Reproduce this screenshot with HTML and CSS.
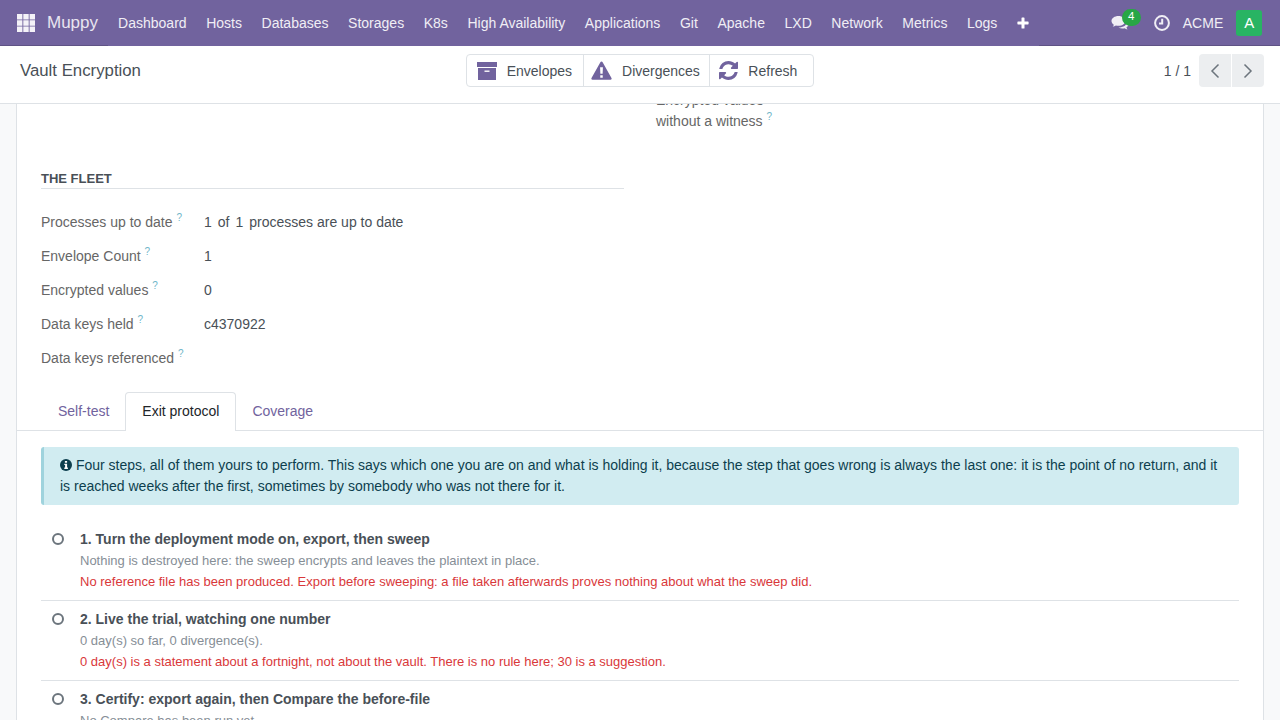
FILE: index.html
```html
<!DOCTYPE html>
<html lang="en">
  <head>
    <meta charset="UTF-8" />
    <title>Vault Encryption - Muppy</title>
    <link rel="stylesheet" href="styles.css">
  </head>
  <body>
    <header class="navbar">
      <div class="brand">
        <svg class="apps-icon" viewBox="0 0 18 18" width="18" height="18">
          <path d="M0 0h5.400v5.400H0zM6.300 0h5.400v5.400H6.300zM12.600 0H18v5.400h-5.400zM0 6.300h5.400v5.400H0zM6.300 6.300h5.400v5.400H6.300zM12.600 6.300H18v5.400h-5.400zM0 12.600h5.400V18H0zM6.300 12.600h5.400V18H6.300zM12.600 12.600H18V18h-5.400z"/>
        </svg>
        <span class="brand-name">Muppy</span>
      </div>
      <nav class="menu">
        <a href="#">Dashboard</a>
        <a href="#">Hosts</a>
        <a href="#">Databases</a>
        <a href="#">Storages</a>
        <a href="#">K8s</a>
        <a href="#">High Availability</a>
        <a href="#">Applications</a>
        <a href="#">Git</a>
        <a href="#">Apache</a>
        <a href="#">LXD</a>
        <a href="#">Network</a>
        <a href="#">Metrics</a>
        <a href="#">Logs</a>
        <a href="#" class="menu-plus">
          <svg viewBox="0 0 12 12" width="12" height="12"><path d="M4.500 1a.6.6 0 0 1 .6-.6h1.800a.6.6 0 0 1 .6.600v3.400H11a.6.6 0 0 1 .6.600v1.800a.6.6 0 0 1-.6.600H7.500V11a.6.6 0 0 1-.6.6H5.100a.6.6 0 0 1-.6-.6V7.400H1a.6.6 0 0 1-.6-.6V5a.6.6 0 0 1 .6-.6h3.500z"/></svg>
        </a>
      </nav>
      <div class="systray">
        <div class="chat">
          <svg viewBox="0 0 18 16" width="18" height="16">
            <path d="M7.500 1C3.600 1 .5 3.200.5 6c0 1.500.9 2.800 2.300 3.700-.2.800-.6 1.500-1.200 2.100 1.200-.1 2.400-.6 3.300-1.300.8.200 1.600.300 2.600.300 3.900 0 7-2.200 7-4.800S11.400 1 7.500 1z"/>
            <path d="M16 6.500c.9.800 1.500 1.700 1.500 2.800 0 1.300-.8 2.400-2.100 3.200.2.700.6 1.300 1.100 1.900-1.100-.1-2.100-.5-2.900-1.200-.7.100-1.400.2-2.200.2-1.500 0-2.800-.3-3.900-.9 4.600.1 8.600-2.200 8.500-6z"/>
          </svg>
          <span class="chat-badge">4</span>
        </div>
        <svg class="clock" viewBox="0 0 16 16" width="16" height="16">
          <circle cx="8" cy="8" r="6.900" />
          <path d="M8.200 3.800v4.600H5" />
        </svg>
        <span class="company">ACME</span>
        <span class="avatar">A</span>
      </div>
    </header>

    <div class="control-panel">
      <div class="cp-title">Vault Encryption</div>
      <div class="stat-buttons">
        <button class="stat-btn">
          <svg viewBox="0 0 20 18" width="20" height="18">
            <path d="M0 0h20v5H0zM1 6h18v12H1z"/>
            <path class="cut" d="M7.500 8.500h5v1.400h-5z"/>
          </svg>
          Envelopes
        </button>
        <button class="stat-btn btn-warning">
          <svg viewBox="0 0 22 20" width="21" height="19">
            <path d="M11 .5c.5 0 1 .3 1.200.7l9.300 16.800c.5.800-.1 1.800-1 1.800H1.500c-.9 0-1.500-1-1-1.800L9.800 1.200c.2-.4.700-.7 1.200-.7z"/>
            <path class="cut" d="M9.500 6.500h3l-.3 7h-2.400zM9.700 15h2.600v2.500H9.700z"/>
          </svg>
          Divergences
        </button>
        <button class="stat-btn">
          <svg viewBox="128 128 1536 1536" width="19" height="19">
            <path d="M1639 1056q0 5-1 7-64 268-268 434.500t-478 166.500q-146 0-282.500-55t-243.500-157l-129 129q-19 19-45 19t-45-19-19-45v-448q0-26 19-45t45-19h448q26 0 45 19t19 45-19 45l-137 137q71 66 161 102t187 36q134 0 250-65t186-179q11-17 53-117 8-23 30-23h192q13 0 22.500 9.500t9.500 22.500zm25-800v448q0 26-19 45t-45 19h-448q-26 0-45-19t-19-45 19-45l138-138q-148-137-349-137-134 0-250 65t-186 179q-11 17-53 117-8 23-30 23h-199q-13 0-22.500-9.500t-9.500-22.500v-7q65-268 270-434.500t480-166.500q146 0 284 55.500t245 156.500l130-129q19-19 45-19t45 19 19 45z"/>
          </svg>
          Refresh
        </button>
      </div>
      <div class="pager">
        <span class="pager-value">1 / 1</span>
        <div class="pager-btns">
          <button class="pager-btn"><svg viewBox="0 0 10 16" width="10" height="16"><path d="M8.500 1.500 2 8l6.500 6.500"/></svg></button>
          <button class="pager-btn"><svg viewBox="0 0 10 16" width="10" height="16"><path d="M1.500 1.500 8 8l-6.500 6.500"/></svg></button>
        </div>
      </div>
    </div>

    <main class="content">
      <div class="sheet">
        <div class="sheet-head">
          <div class="groups groups-top">
            <div></div>
            <div class="group-right">
              <div class="field-label">Encrypted values without a witness <sup>?</sup></div>
              <div class="field-value">0</div>
            </div>
          </div>

          <div class="groups">
            <section class="group">
              <h2 class="group-title">THE FLEET</h2>
              <div class="field-row">
                <div class="field-label">Processes up to date <sup>?</sup></div>
                <div class="field-value inline-value"><span>1</span><span>of</span><span>1</span><span>processes are up to date</span></div>
              </div>
              <div class="field-row">
                <div class="field-label">Envelope Count <sup>?</sup></div>
                <div class="field-value">1</div>
              </div>
              <div class="field-row">
                <div class="field-label">Encrypted values <sup>?</sup></div>
                <div class="field-value">0</div>
              </div>
              <div class="field-row">
                <div class="field-label">Data keys held <sup>?</sup></div>
                <div class="field-value">c4370922</div>
              </div>
              <div class="field-row">
                <div class="field-label">Data keys referenced <sup>?</sup></div>
                <div class="field-value"></div>
              </div>
            </section>
            <div></div>
          </div>
        </div>

        <ul class="tabs">
          <li><a href="#">Self-test</a></li>
          <li class="active"><a href="#">Exit protocol</a></li>
          <li><a href="#">Coverage</a></li>
        </ul>

        <div class="tab-pane">
          <div class="alert">
            <svg class="info-icon" viewBox="0 0 12 12" width="12" height="12">
              <circle cx="6" cy="6" r="6"/>
              <path class="cut" d="M4.900 2h2.200v1.700H4.900zM4.300 4.700h2.800v3.900h.8V10H4.300V8.600h.8V6.100h-.8z"/>
            </svg>
            Four steps, all of them yours to perform. This says which one you are on and what is holding it, because the step that goes wrong is always the last one: it is the point of no return, and it is reached weeks after the first, sometimes by somebody who was not there for it.
          </div>

          <div class="step">
            <span class="step-mark"></span>
            <div>
              <div class="step-title">1. Turn the deployment mode on, export, then sweep</div>
              <div class="step-note">Nothing is destroyed here: the sweep encrypts and leaves the plaintext in place.</div>
              <div class="step-warn">No reference file has been produced. Export before sweeping: a file taken afterwards proves nothing about what the sweep did.</div>
            </div>
          </div>
          <div class="step">
            <span class="step-mark"></span>
            <div>
              <div class="step-title">2. Live the trial, watching one number</div>
              <div class="step-note">0 day(s) so far, 0 divergence(s).</div>
              <div class="step-warn">0 day(s) is a statement about a fortnight, not about the vault. There is no rule here; 30 is a suggestion.</div>
            </div>
          </div>
          <div class="step">
            <span class="step-mark"></span>
            <div>
              <div class="step-title">3. Certify: export again, then Compare the before-file</div>
              <div class="step-note">No Compare has been run yet.</div>
            </div>
          </div>
        </div>
      </div>
    </main>
  </body>
</html>
```

FILE: styles.css
```css
/* Page */
html,
body {
  height: 100%;
}

body {
  font-family: "Liberation Sans", Arial, sans-serif;
  font-size: 14px;
  margin: 0;
  color: #495057;
  background-color: #fff;
  display: flex;
  flex-direction: column;
  overflow: hidden;
}

/* Top bar */
.navbar {
  flex: none;
  height: 46px;
  display: flex;
  align-items: stretch;
  background-color: #71639e;
  color: #fff;
}

.brand {
  flex: none;
  display: flex;
  align-items: center;
  gap: 12px;
  padding-left: 17px;
  width: 91.300px;
  border-bottom: 1px solid #5f5385;
}

.apps-icon {
  fill: #f4f2f8;
}

.brand-name {
  font-size: 17px;
  color: #e8e5f0;
}

.menu {
  flex: none;
  display: flex;
  align-items: center;
  white-space: nowrap;
}

.menu a {
  color: #f0eef5;
  text-decoration: none;
  padding: 0 9.800px;
}

.menu-plus svg {
  display: block;
  fill: #fff;
}

.systray {
  margin-left: auto;
  display: flex;
  align-items: center;
  padding-right: 18px;
  padding-left: 72px;
  border-bottom: 1px solid #5f5385;
}

.chat {
  position: relative;
  display: flex;
  margin-right: 25px;
}

.chat svg {
  fill: #f0eef5;
}

.chat-badge {
  position: absolute;
  top: -6px;
  left: 11px;
  width: 19px;
  height: 17px;
  border-radius: 9px;
  background-color: #28a745;
  color: #fff;
  font-size: 11.500px;
  line-height: 15px;
  text-align: center;
}

.clock {
  fill: none;
  stroke: #f0eef5;
  stroke-width: 2;
  margin-right: 13px;
}

.company {
  color: #f0eef5;
  margin-right: 13px;
}

.avatar {
  width: 26px;
  height: 26px;
  border-radius: 3px;
  background-color: #28b463;
  color: #fff;
  font-size: 15px;
  line-height: 26px;
  text-align: center;
}

/* Control panel */
.control-panel {
  flex: none;
  height: 58px;
  box-sizing: border-box;
  display: grid;
  grid-template-columns: 1fr auto 1fr;
  align-items: start;
  padding: 8px 16px 0;
  background-color: #fff;
  border-bottom: 1px solid #dee2e6;
}

.cp-title {
  font-size: 16.800px;
  line-height: 33px;
  padding-left: 4px;
  color: #495057;
}

.stat-buttons {
  display: flex;
  height: 33px;
  border: 1px solid #dee2e6;
  border-radius: 4px;
  box-sizing: border-box;
}

.stat-btn {
  display: flex;
  align-items: center;
  gap: 10px;
  padding: 0 11px 0 10px;
  font: inherit;
  color: #495057;
  background: none;
  border: none;
  border-right: 1px solid #dee2e6;
}

.stat-btn:last-child {
  border-right: none;
  padding: 0 16px 0 9px;
}

.stat-btn svg {
  fill: #71639e;
}

.btn-warning {
  padding: 0 9.500px 0 7px;
}

.stat-btn svg .cut,
.info-icon .cut {
  fill: #fff;
}

.pager {
  justify-self: end;
  display: flex;
  align-items: center;
  gap: 8px;
}

.pager-value {
  color: #495057;
}

.pager-btns {
  display: flex;
  gap: 1px;
}

.pager-btn {
  width: 32px;
  height: 33px;
  display: flex;
  align-items: center;
  justify-content: center;
  padding: 0;
  background-color: #eceef0;
  border: none;
}

.pager-btn:first-child {
  border-radius: 4px 0 0 4px;
}

.pager-btn:last-child {
  border-radius: 0 4px 4px 0;
}

.pager-btn svg {
  fill: none;
  stroke: #6c757d;
  stroke-width: 1.500;
}

/* Form sheet, scrolled down a little */
.content {
  flex: 1;
  min-height: 0;
  overflow: hidden;
  background-color: #f8f9fa;
  padding: 0 16px;
}

.sheet {
  margin-top: -17px;
  background-color: #fff;
  border-left: 1px solid #dee2e6;
  border-right: 1px solid #dee2e6;
}

.sheet-head {
  padding: 0 24px;
}

.groups {
  display: grid;
  grid-template-columns: 1fr 1fr;
  gap: 32px;
}

.groups-top {
  height: 84px;
}

.group-right {
  display: grid;
  grid-template-columns: 167px 1fr;
}

.group-right .field-label {
  line-height: 21px;
  padding-top: 3px;
  padding-right: 30px;
}

.group-right .field-value {
  padding-top: 3px;
}

.group-title {
  margin: 0 0 16px;
  padding-bottom: 1px;
  font-size: 13px;
  line-height: 16px;
  color: #495057;
  border-bottom: 1px solid #dee2e6;
}

.field-row {
  display: grid;
  grid-template-columns: 163px 1fr;
  height: 34px;
  align-items: center;
}

.field-label {
  color: #666;
}

.field-label sup {
  color: #6fb6c9;
  font-size: 10px;
  line-height: 0;
}

.field-value {
  color: #495057;
}

.inline-value {
  display: flex;
  gap: 6px;
}

/* Tabs */
.tabs {
  display: flex;
  list-style: none;
  margin: 17px 0 0;
  padding: 0 24px;
  border-bottom: 1px solid #dee2e6;
}

.tabs li {
  margin: 0 -1px -1px 0;
}

.tabs a {
  display: block;
  padding: 9px 16px 11px;
  line-height: 18px;
  color: #71639e;
  text-decoration: none;
  border: 1px solid transparent;
  border-bottom: none;
  border-radius: 4px 4px 0 0;
}

.tabs .active a {
  color: #212529;
  background-color: #fff;
  border-color: #dee2e6;
  height: 39px;
  box-sizing: border-box;
}

.tab-pane {
  padding: 16px 24px;
}

.alert {
  padding: 8px 16px;
  line-height: 21px;
  color: #0d3f4e;
  background-color: #d1ecf1;
  border-left: 3px solid #9fd3dd;
  border-radius: 3px;
  margin-bottom: 16px;
}

.info-icon {
  fill: #0d3f4e;
  vertical-align: -1px;
}

/* Exit protocol steps */
.step {
  display: flex;
  height: 79px;
  padding-left: 11px;
  border-bottom: 1px solid #dee2e6;
}

.step:last-child {
  border-bottom: none;
}

.step-mark {
  flex: none;
  width: 8px;
  height: 8px;
  margin: 12px 16px 0 0;
  border: 2px solid #6c757d;
  border-radius: 50%;
}

.step-title {
  font-weight: bold;
  line-height: 21px;
  padding-top: 8px;
}

.step-note {
  font-size: 13px;
  line-height: 20px;
  color: #868e96;
  margin-top: 1px;
}

.step-warn {
  font-size: 13px;
  line-height: 20px;
  color: #d9383a;
  margin-top: 1px;
}
```
